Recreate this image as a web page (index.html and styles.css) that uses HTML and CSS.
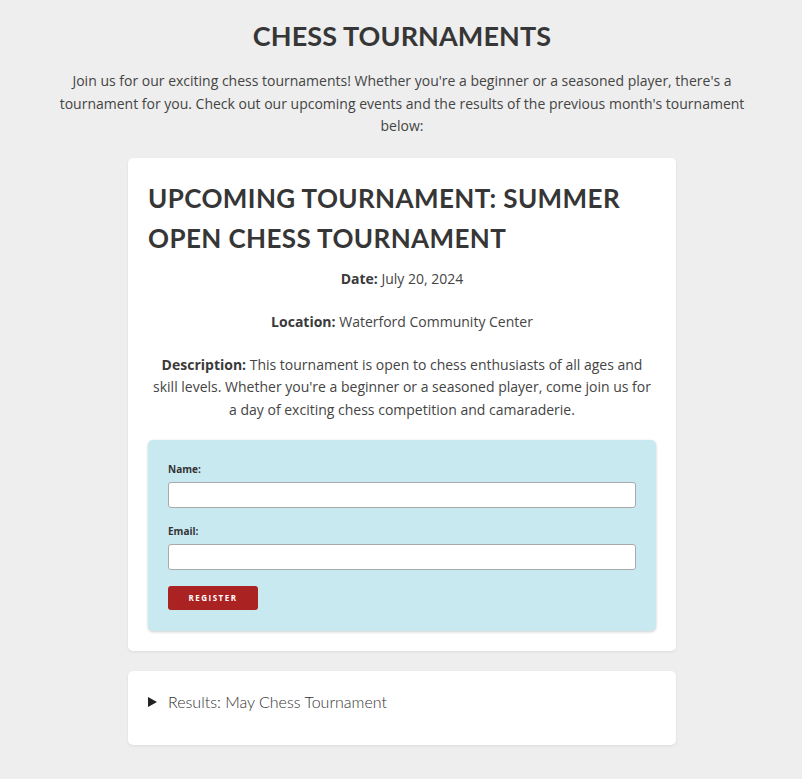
FILE: index.html
```html
<!DOCTYPE html>
<html lang="en">
<head>
<meta charset="utf-8">
<title>Chess Tournaments</title>
<link rel="stylesheet" href="styles.css">
</head>
<body>
<main class="page">
  <h1 class="page-title">CHESS TOURNAMENTS</h1>
  <p class="intro">Join us for our exciting chess tournaments! Whether you're a beginner or a seasoned player, there's a tournament for you. Check out our upcoming events and the results of the previous month's tournament below:</p>

  <section class="card">
    <h2 class="card-title">UPCOMING TOURNAMENT: SUMMER OPEN CHESS TOURNAMENT</h2>
    <p class="info"><strong>Date:</strong> July 20, 2024</p>
    <p class="info"><strong>Location:</strong> Waterford Community Center</p>
    <p class="info info-last"><strong>Description:</strong> This tournament is open to chess enthusiasts of all ages and skill levels. Whether you're a beginner or a seasoned player, come join us for a day of exciting chess competition and camaraderie.</p>

    <form class="reg-form">
      <label class="field-label" for="name">Name:</label>
      <input class="field-input" id="name" type="text">
      <label class="field-label" for="email">Email:</label>
      <input class="field-input" id="email" type="email">
      <button class="btn" type="button">REGISTER</button>
    </form>
  </section>

  <section class="card card-results">
    <details class="results">
      <summary class="results-summary"><span class="tri"></span>Results: May Chess Tournament</summary>
    </details>
  </section>
</main>
</body>
</html>
```

FILE: styles.css
```css
html, body {
  margin: 0;
  padding: 0;
  background: #eeeeee;
}

body {
  font-family: "Open Sans", "Noto Sans", sans-serif;
  font-size: 14px;
  line-height: 22.5px;
  color: #444;
}

.page {
  padding: 20px 49px 34px 51px;
  display: flex;
  flex-direction: column;
  align-items: center;
}

.page-title {
  font-family: "Lato", "Inter", sans-serif;
  font-weight: 700;
  font-size: 27px;
  letter-spacing: 0.1px;
  color: #363636;
  margin: 0 0 18px;
  line-height: 32px;
  text-align: center;
}

.intro {
  margin: 0 0 20px;
  text-align: center;
}

.card {
  width: 548px;
  box-sizing: border-box;
  background: #fff;
  border-radius: 5px;
  box-shadow: 0 1px 3px rgba(0,0,0,0.08);
  padding: 20px;
  margin-bottom: 20px;
}

.card-title {
  font-family: "Lato", "Inter", sans-serif;
  font-weight: 700;
  font-size: 26px;
  letter-spacing: 0.4px;
  line-height: 40px;
  color: #363636;
  margin: 0 0 10px;
}

.info {
  text-align: center;
  margin: 0 0 20.5px;
}

.info-last {
  margin-bottom: 18.5px;
}

.info strong {
  font-weight: 700;
  color: #3a3a3a;
}

.reg-form {
  display: flex;
  flex-direction: column;
  align-items: flex-start;
  background: #c9e9f1;
  border-radius: 5px;
  box-shadow: 0 1px 3px rgba(0,0,0,0.2);
  padding: 20px 20px 21px;
  margin: 0;
}

.field-label {
  font-size: 10px;
  font-weight: 700;
  color: #333;
  line-height: 14px;
  margin: 2px 0 6px;
}

.field-input {
  width: 100%;
  box-sizing: border-box;
  height: 26px;
  border: 1px solid #aaa;
  border-radius: 3px;
  background: #fff;
  margin: 0 0 14px;
  padding: 0 8px;
}

.btn {
  width: 90px;
  height: 24px;
  border: none;
  border-radius: 3px;
  background: #aa2222;
  color: #fff;
  font-family: "Open Sans", sans-serif;
  font-size: 8px;
  font-weight: 700;
  letter-spacing: 1.5px;
  padding: 0;
  margin-top: 2px;
}

.card-results {
  padding: 20px 20px 32px;
}

.results-summary {
  list-style: none;
  display: flex;
  align-items: center;
  font-family: "Lato", "Inter", sans-serif;
  font-weight: 300;
  font-size: 16px;
  line-height: 22px;
  color: #333;
  cursor: pointer;
}

.results-summary::-webkit-details-marker {
  display: none;
}

.tri {
  width: 0;
  height: 0;
  border-top: 5px solid transparent;
  border-bottom: 5px solid transparent;
  border-left: 9px solid #222;
  margin: 0 11px 0 0;
}
```
